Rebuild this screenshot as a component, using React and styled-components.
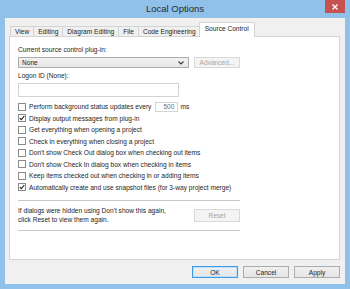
import React from "react";
import styled, { createGlobalStyle } from "styled-components";

const Global = createGlobalStyle`
html, body { margin:0; padding:0; }
body { font-family:"Liberation Sans", Arial, sans-serif; color:#1e1e1e; }
`;

const Window = styled.div`
width:350px;
height:289px;
background:#8fc1eb;
display:flex;
flex-direction:column;
box-sizing:border-box;
`;

const TitleBar = styled.div`
height:18px;
flex:none;
display:grid;
grid-template-columns:1fr auto 1fr;
align-items:start;
`;

const Title = styled.div`
grid-column:2;
font-size:9.5px;
line-height:18px;
color:#2b2b2b;
`;

const Close = styled.div`
grid-column:3;
justify-self:end;
margin-right:5px;
width:20px;
height:13px;
background:#c75050;
color:#fff;
display:flex;
align-items:center;
justify-content:center;
`;

const Client = styled.div`
flex:1;
margin:0 5px 5px;
background:#f0f0f0;
padding:5px 5px 6px 4px;
display:flex;
flex-direction:column;
box-sizing:border-box;
`;

const Tabs = styled.div`
display:flex;
align-items:flex-end;
padding-left:1px;
height:14px;
position:relative;
z-index:1;
margin-bottom:-1px;
`;

const Tab = styled.div`
box-sizing:border-box;
height:${p => (p.active ? "15px" : "11px")};
padding:0 ${p => (p.active ? "5px" : "4px")};
margin-right:${p => (p.active ? "-1px" : "0")};
background:${p => (p.active ? "#fff" : "#f0f0f0")};
border:1px solid #d4d4d4;
border-bottom:${p => (p.active ? "none" : "1px solid #d4d4d4")};
margin-left:${p => (p.active ? "-2px" : "-1px")};
font-size:6.6px;
line-height:${p => (p.active ? "12px" : "10px")};
color:#1e1e1e;
white-space:nowrap;
&:first-child{ margin-left:0; }
`;

const Panel = styled.div`
flex:1;
background:#fff;
border:1px solid #d4d4d4;
padding:0 8px;
display:flex;
flex-direction:column;
font-size:6.6px;
`;

const Label = styled.div`
line-height:10px;
margin-top:${p => p.top || 0}px;
`;

const Row = styled.div`
display:flex;
align-items:center;
gap:5px;
margin-top:${p => p.top || 0}px;
`;

const Select = styled.div`
box-sizing:border-box;
width:171px;
height:11px;
border:1px solid #acacac;
background:linear-gradient(#f2f2f2,#e6e6e6);
display:flex;
align-items:center;
justify-content:space-between;
padding:0 4px 0 3px;
`;

const Button = styled.div`
box-sizing:border-box;
width:46px;
height:${p => p.h || 12}px;
border:1px solid ${p => (p.disabled ? "#d9d9d9" : p.primary ? "#3c9be6" : "#acacac")};
background:${p => (p.disabled ? "#f4f4f4" : "linear-gradient(#f0f0f0,#e5e5e5)")};
color:${p => (p.disabled ? "#a6a6a6" : "#1e1e1e")};
font-size:6.6px;
display:flex;
align-items:center;
justify-content:center;
box-shadow:${p => (p.primary ? "inset 0 0 0 1px #bfe0fa" : "none")};
`;

const TextBox = styled.div`
box-sizing:border-box;
width:161px;
height:14px;
border:1px solid #d4d4d4;
margin-top:2px;
`;

const Checks = styled.div`
margin-top:4px;
display:flex;
flex-direction:column;
`;

const CheckRow = styled.div`
display:flex;
align-items:center;
height:11.5px;
white-space:nowrap;
`;

const Box = styled.span`
box-sizing:border-box;
width:8px;
height:8px;
border:1px solid #8a8a8a;
background:#fff;
margin-right:3px;
display:flex;
align-items:center;
justify-content:center;
`;

const Spin = styled.span`
box-sizing:border-box;
width:23px;
height:10px;
border:1px solid #d4d4d4;
margin:0 2px 0 4px;
text-align:right;
padding-right:3px;
line-height:8px;
color:#6d6d6d;
`;

const Rule = styled.div`
width:222px;
height:1px;
background:#c8c8c8;
margin-top:${p => p.top || 0}px;
`;

const ResetRow = styled.div`
width:222px;
display:flex;
justify-content:space-between;
align-items:center;
margin-top:5px;
line-height:9px;
`;

const Footer = styled.div`
display:flex;
justify-content:flex-end;
gap:5px;
margin-top:6px;
`;

const Check = ({ on, children }) => (
  <CheckRow>
    <Box>
      {on && (
        <svg width="6" height="6" viewBox="0 0 6 6">
          <path d="M0.8 3.1 L2.3 4.7 L5.3 1" stroke="#1e1e1e" strokeWidth="1.1" fill="none" />
        </svg>
      )}
    </Box>
    {children}
  </CheckRow>
);

const tabs = ["View", "Editing", "Diagram Editing", "File", "Code Engineering", "Source Control"];

const App = () => {
  return (
    <>
      <Global />
      <Window>
        <TitleBar>
          <Title>Local Options</Title>
          <Close>
            <svg width="6" height="6" viewBox="0 0 6 6">
              <path d="M0.5 0.5 L5.5 5.5 M5.5 0.5 L0.5 5.5" stroke="#fff" strokeWidth="1.3" />
            </svg>
          </Close>
        </TitleBar>
        <Client>
          <Tabs>
            {tabs.map(t => (
              <Tab key={t} active={t === "Source Control"}>{t}</Tab>
            ))}
          </Tabs>
          <Panel>
            <Label top={8}>Current source control plug-in:</Label>
            <Row top={2}>
              <Select>
                <span>None</span>
                <svg width="6" height="4" viewBox="0 0 6 4">
                  <path d="M0.5 0.5 L3 3 L5.5 0.5" stroke="#3a3a3a" strokeWidth="1.1" fill="none" />
                </svg>
              </Select>
              <Button disabled h={11}>Advanced...</Button>
            </Row>
            <Label top={3}>Logon ID (None):</Label>
            <TextBox />
            <Checks>
              <Check>
                Perform background status updates every<Spin>500</Spin>ms
              </Check>
              <Check on>Display output messages from plug-in</Check>
              <Check>Get everything when opening a project</Check>
              <Check>Check in everything when closing a project</Check>
              <Check>Don't show Check Out dialog box when checking out items</Check>
              <Check>Don't show Check In dialog box when checking in items</Check>
              <Check>Keep items checked out when checking in or adding items</Check>
              <Check on>Automatically create and use snapshot files (for 3-way project merge)</Check>
            </Checks>
            <Rule top={7} />
            <ResetRow>
              <div>
                If dialogs were hidden using Don't show this again,
                <br />
                click Reset to view them again.
              </div>
              <Button disabled h={13}>Reset</Button>
            </ResetRow>
            <Rule top={6} />
          </Panel>
          <Footer>
            <Button primary>OK</Button>
            <Button>Cancel</Button>
            <Button>Apply</Button>
          </Footer>
        </Client>
      </Window>
    </>
  );
};

export default App;
